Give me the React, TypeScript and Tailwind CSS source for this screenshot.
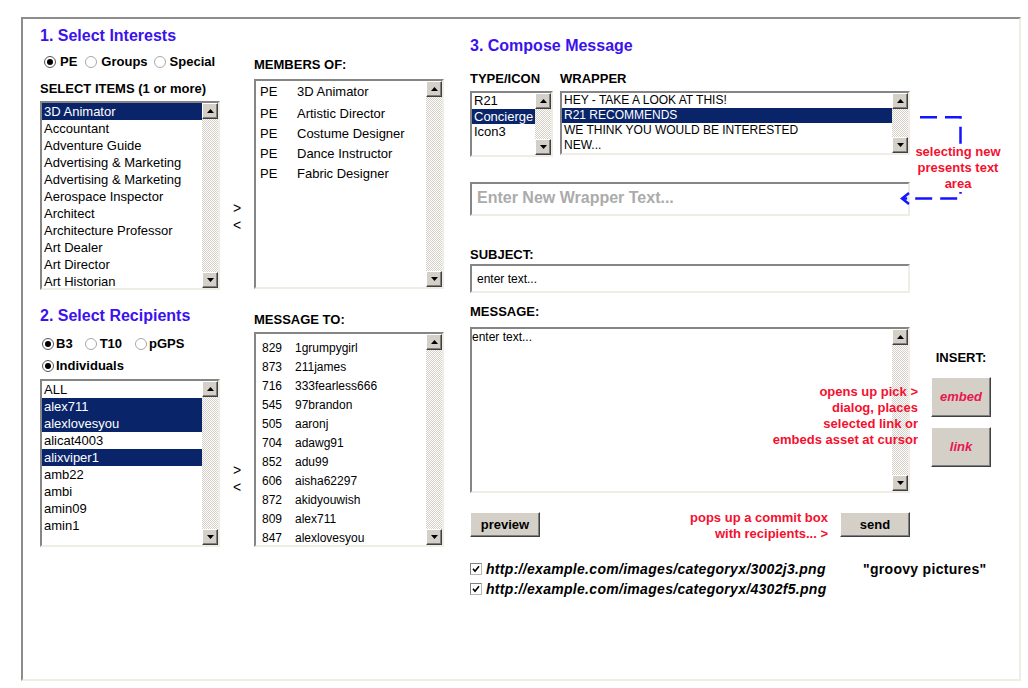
import type { ReactNode } from 'react'
import clsx from 'clsx'

const interests = [
  '3D Animator',
  'Accountant',
  'Adventure Guide',
  'Advertising & Marketing',
  'Advertising & Marketing',
  'Aerospace Inspector',
  'Architect',
  'Architecture Professor',
  'Art Dealer',
  'Art Director',
  'Art Historian',
]

const members = ['3D Animator', 'Artistic Director', 'Costume Designer', 'Dance Instructor', 'Fabric Designer']

const people = [
  { name: 'ALL' },
  { name: 'alex711', selected: true },
  { name: 'alexlovesyou', selected: true },
  { name: 'alicat4003' },
  { name: 'alixviper1', selected: true },
  { name: 'amb22' },
  { name: 'ambi' },
  { name: 'amin09' },
  { name: 'amin1' },
]

const recipients = [
  ['829', '1grumpygirl'],
  ['873', '211james'],
  ['716', '333fearless666'],
  ['545', '97brandon'],
  ['505', 'aaronj'],
  ['704', 'adawg91'],
  ['852', 'adu99'],
  ['606', 'aisha62297'],
  ['872', 'akidyouwish'],
  ['809', 'alex711'],
  ['847', 'alexlovesyou'],
]

const types = [{ name: 'R21' }, { name: 'Concierge', selected: true }, { name: 'Icon3' }]

const wrappers = [
  { name: 'HEY - TAKE A LOOK AT THIS!' },
  { name: 'R21 RECOMMENDS', selected: true },
  { name: 'WE THINK YOU WOULD BE INTERESTED' },
  { name: 'NEW...' },
]

const heading = 'text-[16px] font-bold leading-[18px] text-[#3b12ee]'
const label = 'text-[13px] font-bold leading-[15px]'
const sunken = 'border-2 border-t-[#858585] border-l-[#858585] border-r-[#efede4] border-b-[#efede4] bg-white'
const raised =
  'border border-t-white border-l-white border-r-[#404040] border-b-[#404040] bg-[#d4d0c8] shadow-[inset_-1px_-1px_0_#808080]'

function ScrollArrow({ up }: { up?: boolean }) {
  return (
    <div className={clsx('flex h-[16px] w-[16px] shrink-0 items-center justify-center', raised)}>
      <svg width="7" height="4" viewBox="0 0 7 4">
        <path d={up ? 'M3.5 0L7 4H0Z' : 'M0 0H7L3.5 4Z'} fill="#000" />
      </svg>
    </div>
  )
}

function Scrollbar() {
  return (
    <div className="flex w-[16px] shrink-0 flex-col">
      <ScrollArrow up />
      <div className="flex-1 bg-[repeating-conic-gradient(#d4d0c8_0%_25%,#ffffff_0%_50%)] bg-size-[2px_2px]" />
      <ScrollArrow />
    </div>
  )
}

function Listbox({ className, children }: { className?: string; children: ReactNode }) {
  return (
    <div className={clsx('flex shrink-0', sunken, className)}>
      <div className="min-w-0 flex-1 overflow-hidden">{children}</div>
      <Scrollbar />
    </div>
  )
}

function Radio({ checked, className }: { checked?: boolean; className?: string }) {
  return (
    <span
      className={clsx(
        'flex h-[12px] w-[12px] shrink-0 items-center justify-center rounded-full border bg-white',
        checked ? 'border-[#555]' : 'border-[#a8a8a8]',
        className,
      )}
    >
      {checked && <span className="h-[6px] w-[6px] rounded-full bg-black" />}
    </span>
  )
}

function Checkbox() {
  return (
    <span className="flex h-[12px] w-[12px] shrink-0 items-center justify-center border border-t-[#808080] border-l-[#808080] border-r-[#b8b4aa] border-b-[#b8b4aa] bg-white">
      <svg width="8" height="8" viewBox="0 0 8 8">
        <path d="M1 3.8L3 6.2L7 1.2" fill="none" stroke="#000" strokeWidth="1.6" />
      </svg>
    </span>
  )
}

function Arrows({ className }: { className?: string }) {
  return (
    <div className={clsx('flex w-[34px] shrink-0 flex-col items-center text-[14px] leading-[17px]', className)}>
      <span>&gt;</span>
      <span>&lt;</span>
    </div>
  )
}

function Row({ selected, className, children }: { selected?: boolean; className?: string; children: ReactNode }) {
  return (
    <div className={clsx('whitespace-nowrap px-[2px]', selected && 'bg-[#0a246a] text-white', className)}>
      {children}
    </div>
  )
}

export default function App() {
  return (
    <div className="h-[688px] w-[1028px] bg-white pl-[21px] pt-[17px] font-['Liberation_Sans',Arial,sans-serif] text-black">
      <div className="flex h-[664px] w-[1000px] border-2 border-t-[#8c8c8c] border-l-[#8c8c8c] border-r-[#efede4] border-b-[#efede4] pl-[17px]">
        {/* left: interests + recipients */}
        <div className="flex w-[404px] shrink-0 flex-col">
          <div className="flex">
            <div className="flex w-[180px] flex-col pt-[8px]">
              <h2 className={heading}>1. Select Interests</h2>
              <div className={clsx('mt-[9px] flex h-[15px] items-center pl-[4px]', label)}>
                <Radio checked />
                <span className="ml-[4px]">PE</span>
                <Radio className="ml-[8px]" />
                <span className="ml-[4px]">Groups</span>
                <Radio className="ml-[6px]" />
                <span className="ml-[4px]">Special</span>
              </div>
              <div className={clsx('mt-[12px]', label)}>SELECT ITEMS (1 or more)</div>
              <Listbox className="mt-[5px] h-[189px] w-[180px]">
                {interests.map((item, i) => (
                  <Row key={i} selected={i === 0} className="h-[17px] text-[13px] leading-[17px]">
                    {item}
                  </Row>
                ))}
              </Listbox>
            </div>
            <Arrows className="pt-[181px]" />
            <div className="flex w-[190px] flex-col pt-[38px]">
              <div className={label}>MEMBERS OF:</div>
              <Listbox className="mt-[7px] h-[210px] w-[190px]">
                <div className="pl-[4px] pt-[1px] text-[13px]">
                  {members.map((m, i) => (
                    <div key={m} className={clsx('flex h-[20px] items-center', i === 0 && 'mb-[2px]')}>
                      <span className="w-[37px]">PE</span>
                      <span>{m}</span>
                    </div>
                  ))}
                </div>
              </Listbox>
            </div>
          </div>

          <div className="flex">
            <div className="flex w-[180px] flex-col">
              <h2 className={clsx('mt-[17px]', heading)}>2. Select Recipients</h2>
              <div className={clsx('mt-[11px] flex h-[15px] items-center pl-[2px]', label)}>
                <Radio checked />
                <span className="ml-[2px]">B3</span>
                <Radio className="ml-[12px]" />
                <span className="ml-[3px]">T10</span>
                <Radio className="ml-[13px]" />
                <span className="ml-[2px]">pGPS</span>
              </div>
              <div className={clsx('mt-[7px] flex h-[15px] items-center pl-[2px]', label)}>
                <Radio checked />
                <span className="ml-[2px]">Individuals</span>
              </div>
              <Listbox className="mt-[6px] h-[168px] w-[180px]">
                {people.map((p) => (
                  <Row key={p.name} selected={p.selected} className="h-[17px] text-[13px] leading-[17px]">
                    {p.name}
                  </Row>
                ))}
              </Listbox>
            </div>
            <Arrows className="pt-[172px]" />
            <div className="flex w-[190px] flex-col pt-[22px]">
              <div className={label}>MESSAGE TO:</div>
              <Listbox className="mt-[5px] h-[215px] w-[190px]">
                <div className="pl-[6px] pt-[4px] text-[12px]">
                  {recipients.map(([id, name]) => (
                    <div key={id} className="flex h-[19px] items-center whitespace-nowrap">
                      <span className="w-[33px]">{id}</span>
                      <span>{name}</span>
                    </div>
                  ))}
                </div>
              </Listbox>
            </div>
          </div>
        </div>

        {/* right: compose */}
        <div className="relative ml-[26px] flex w-[549px] flex-col pt-[18px]">
          <h2 className={heading}>3. Compose Message</h2>
          <div className={clsx('mt-[16px] flex', label)}>
            <span className="w-[90px]">TYPE/ICON</span>
            <span>WRAPPER</span>
          </div>
          <div className="mt-[5px] flex items-start">
            <Listbox className="h-[66px] w-[83px]">
              {types.map((t) => (
                <Row key={t.name} selected={t.selected} className="h-[15.5px] text-[13px] leading-[15.5px]">
                  {t.name}
                </Row>
              ))}
            </Listbox>
            <Listbox className="ml-[7px] h-[64px] w-[350px]">
              {wrappers.map((w) => (
                <Row key={w.name} selected={w.selected} className="h-[15px] text-[12px] leading-[15px]">
                  {w.name}
                </Row>
              ))}
            </Listbox>
          </div>
          <div className={clsx('mt-[25px] h-[34px] w-[440px] pl-[5px] pt-[2px]', sunken)}>
            <span className="text-[16px] font-bold leading-[18px] text-[#ababab]">Enter New Wrapper Text...</span>
          </div>

          <div className={clsx('mt-[31px]', label)}>SUBJECT:</div>
          <div className={clsx('mt-[2px] flex h-[29px] w-[440px] items-center pl-[5px] text-[12px]', sunken)}>
            enter text...
          </div>

          <div className={clsx('mt-[11px]', label)}>MESSAGE:</div>
          <div className="mt-[8px] flex items-start">
            <Listbox className="h-[166px] w-[440px]">
              <div className="pt-[1px] text-[12px] leading-[14px]">enter text...</div>
            </Listbox>
            <div className="ml-[21px] flex w-[60px] flex-col items-center pt-[23px]">
              <div className={label}>INSERT:</div>
              <button className={clsx('mt-[12px] h-[40px] w-[60px] text-[13px] font-bold italic text-[#e8174f]', raised)}>
                embed
              </button>
              <button className={clsx('mt-[10px] h-[40px] w-[60px] text-[13px] font-bold italic text-[#e8174f]', raised)}>
                link
              </button>
            </div>
          </div>

          <div className="mt-[19px] flex h-[25px] w-[440px] items-start">
            <button className={clsx('h-[25px] w-[70px] text-[13px] font-bold', raised)}>preview</button>
            <div className="-mt-[2px] ml-auto text-right text-[13px] font-bold leading-[16px] text-[#f5102f]">
              pops up a commit box
              <br />
              with recipients... &gt;
            </div>
            <button className={clsx('ml-[12px] h-[25px] w-[70px] text-[13px] font-bold', raised)}>send</button>
          </div>

          <div className="mt-[22px] flex flex-col text-[14px] font-bold leading-[20px] tracking-[0.3px]">
            <div className="flex h-[20px] items-center">
              <Checkbox />
              <span className="ml-[4px] w-[377px] italic">http://example.com/images/categoryx/3002j3.png</span>
              <span>"groovy pictures"</span>
            </div>
            <div className="flex h-[20px] items-center">
              <Checkbox />
              <span className="ml-[4px] italic">http://example.com/images/categoryx/4302f5.png</span>
            </div>
          </div>

          {/* callout: wrapper "NEW..." opens the text area */}
          <svg className="absolute left-[430px] top-[93px]" width="66" height="95" viewBox="0 0 66 95">
            <path
              d="M20 5.3H60.5V86.5H3"
              fill="none"
              stroke="#1414ff"
              strokeWidth="2.5"
              strokeDasharray="17 8"
            />
            <path d="M9 81L2 86.5L9 92" fill="none" stroke="#1414ff" strokeWidth="2.5" />
          </svg>
          <div className="absolute left-[441px] top-[125px] w-[94px] bg-white text-center text-[13px] font-bold leading-[16px] text-[#f5102f]">
            selecting new
            <br />
            presents text
            <br />
            area
          </div>

          {/* callout: insert buttons */}
          <div className="absolute left-[248px] top-[365px] w-[200px] text-right text-[13px] font-bold leading-[16px] text-[#f5102f]">
            opens up pick &gt;
            <br />
            dialog, places
            <br />
            selected link or
            <br />
            embeds asset at cursor
          </div>
        </div>
      </div>
    </div>
  )
}
